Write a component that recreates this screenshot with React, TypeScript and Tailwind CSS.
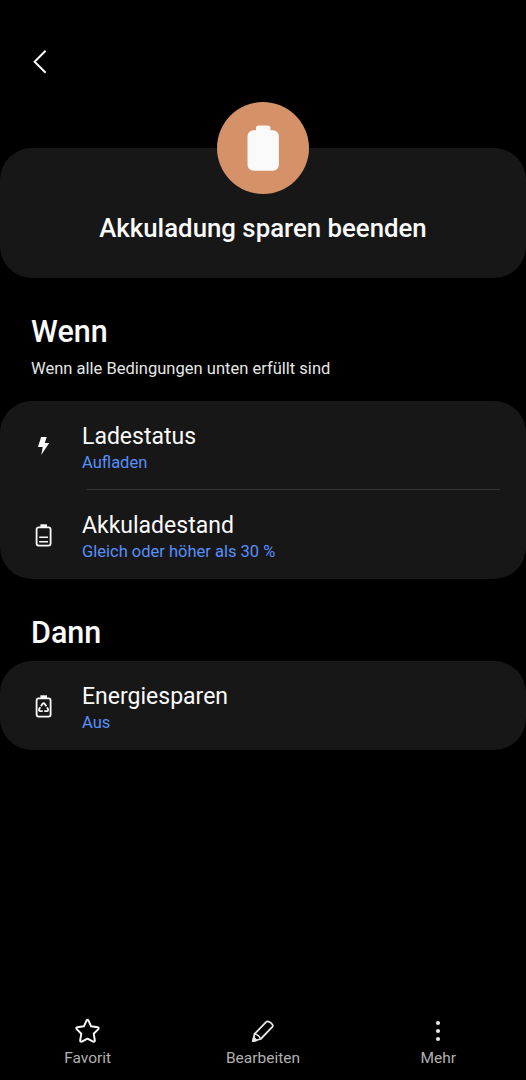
import React from 'react';

interface RoutineRowProps {
  icon: React.ReactNode;
  title: string;
  value: string;
}

interface ToolbarButtonProps {
  icon: React.ReactNode;
  label: string;
}

const BatteryOutline: React.FC<{ children?: React.ReactNode }> = ({ children }) => (
  <svg width="26" height="26" viewBox="0 0 26 26" fill="none" stroke="#fafafa" strokeWidth="1.8">
    <rect x="6.6" y="4.4" width="14" height="18.2" rx="2" />
    <path d="M10.4 1.3h6.6v3h-6.6z" fill="#fafafa" stroke="none" />
    {children}
  </svg>
);

const BoltIcon = () => (
  <svg width="26" height="26" viewBox="0 0 26 26" fill="#fafafa">
    <path d="M11.1 3.1h5.6l-1.9 5.8h4.4L11.3 20.9l1.4-8H8z" />
  </svg>
);

const BatteryLevelIcon = () => (
  <BatteryOutline>
    <path d="M9.2 14.2h8.8M9.2 18.8h8.8" strokeWidth="1.6" />
  </BatteryOutline>
);

const PowerSavingIcon = () => (
  <BatteryOutline>
    <g strokeWidth="1.8">
      <path d="M10.9 12.3l1.7-2.6q1-1 2 0l1.7 2.6" />
      <path d="M17 13.3l1 1.9q.5 1.8-1.2 2h-2.6" />
      <path d="M12.7 17.2h-2.4q-1.7-.2-1.2-2l1.2-2" />
    </g>
  </BatteryOutline>
);

const StarIcon = () => (
  <svg width="28" height="28" viewBox="0 0 28 28" fill="none" stroke="#fafafa" strokeWidth="2" strokeLinejoin="round">
    <path d="M12.5 3.7q1-1.7 2 0l2.6 5.6 6.5.9q1.7.5.7 1.9l-4.6 4.6 1.1 6.7q0 1.7-1.7 1.2l-5.6-2.9-5.6 2.9q-1.7.5-1.7-1.2l1.1-6.7-4.6-4.6q-1-1.4.7-1.9l6.5-.9z" />
  </svg>
);

const PencilIcon = () => (
  <svg width="28" height="28" viewBox="0 0 28 28" fill="none" stroke="#e6e6e6" strokeWidth="1.8" strokeLinejoin="round">
    <path d="M4 24.2l1.5-7.2L17 5.2q1.2-1.1 2.6-.6 2.8.9 4 3.2.6 1.2-.5 2.4L11.7 22z" />
    <path d="M5.5 17q4.6.8 6.2 5" strokeWidth="1.5" />
    <path d="M4 24.2l.7-3.6 2.8 2.8z" fill="#e6e6e6" />
  </svg>
);

const MoreIcon = () => (
  <svg width="28" height="28" viewBox="0 0 28 28" fill="#e6e6e6">
    <circle cx="14" cy="6" r="2.1" />
    <circle cx="14" cy="14" r="2.1" />
    <circle cx="14" cy="22" r="2.1" />
  </svg>
);

const RoutineRow: React.FC<RoutineRowProps> = ({ icon, title, value }) => (
  <div className="flex h-[89px] items-start pl-[30px]">
    <div className="mt-[33px] mr-[26px] h-[26px] w-[26px]">{icon}</div>
    <div className="pt-[21px]">
      <div className="text-[23px] leading-[29px] text-[#fafafa]">{title}</div>
      <div className="text-[16.5px] leading-[23px] text-[#598ffa]">{value}</div>
    </div>
  </div>
);

const ToolbarButton: React.FC<ToolbarButtonProps> = ({ icon, label }) => (
  <button className="flex w-[175.33px] flex-col items-center">
    {icon}
    <span className="mt-[3px] text-[15.5px] leading-[20px] text-[#b0b0b0]">{label}</span>
  </button>
);

const App: React.FC = () => {
  return (
    <div className="flex h-[1080px] w-[526px] flex-col overflow-hidden bg-black font-['Roboto',sans-serif]">
      {/* Header */}
      <header className="h-[148.4px] shrink-0 pt-[48px] pl-[26px]">
        <button className="block" aria-label="Zurück">
          <svg width="28" height="28" viewBox="0 0 28 28" fill="none" stroke="#fafafa" strokeWidth="2">
            <path d="M19.6 2.7L8.6 13.7l11 11" />
          </svg>
        </button>
      </header>

      {/* Routine name */}
      <section className="relative flex h-[130px] shrink-0 flex-col items-center rounded-[32px] bg-[#171717]">
        <div className="absolute -top-[46.4px] flex h-[92px] w-[92px] items-center justify-center rounded-full bg-[#d59168]">
          <svg width="32" height="46" viewBox="0 0 32 46" fill="#fafafa">
            <rect x="9" y="0.6" width="14.5" height="10" rx="2.8" />
            <rect x="0.5" y="5.3" width="31.4" height="40.4" rx="6" />
          </svg>
        </div>
        <h1 className="mt-[64px] text-[25.8px] leading-[32px] font-medium text-[#fafafa]">
          Akkuladung sparen beenden
        </h1>
      </section>

      {/* Conditions */}
      <div className="h-[123px] shrink-0 pt-[35.6px] pl-[31px]">
        <h2 className="text-[30.5px] leading-[36px] font-medium text-[#fafafa]">Wenn</h2>
        <p className="mt-[9px] text-[16.55px] leading-[20px] text-[#e6e6e6]">
          Wenn alle Bedingungen unten erfüllt sind
        </p>
      </div>
      <section className="shrink-0 rounded-[32px] bg-[#171717]">
        <RoutineRow icon={<BoltIcon />} title="Ladestatus" value="Aufladen" />
        <div className="-mt-px mr-[26px] ml-[87px] h-px bg-[#353535]" />
        <RoutineRow icon={<BatteryLevelIcon />} title="Akkuladestand" value="Gleich oder höher als 30 %" />
      </section>

      {/* Actions */}
      <div className="h-[82px] shrink-0 pt-[35.6px] pl-[31px]">
        <h2 className="text-[30.5px] leading-[36px] font-medium text-[#fafafa]">Dann</h2>
      </div>
      <section className="shrink-0 rounded-[32px] bg-[#171717]">
        <RoutineRow icon={<PowerSavingIcon />} title="Energiesparen" value="Aus" />
      </section>

      {/* Bottom toolbar */}
      <nav className="mt-auto flex h-[63px] shrink-0 items-start">
        <ToolbarButton icon={<StarIcon />} label="Favorit" />
        <ToolbarButton icon={<PencilIcon />} label="Bearbeiten" />
        <ToolbarButton icon={<MoreIcon />} label="Mehr" />
      </nav>
    </div>
  );
};

export default App;
